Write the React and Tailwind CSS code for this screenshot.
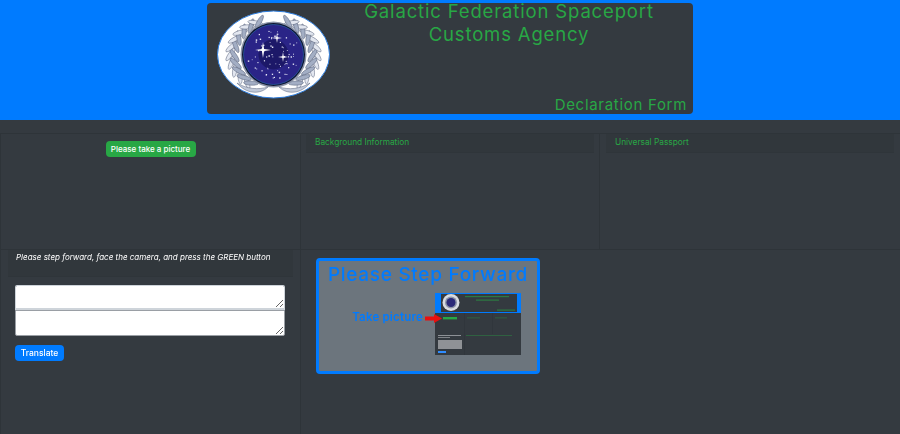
import React from 'react';

const face = "font-['Inter','Noto_Sans',sans-serif]";

// stars spread over the seal, fixed seed so the picture stays the same
function makeStars(count, cx, cy, r) {
  let seed = 17;
  const next = () => {
    seed = (seed * 16807) % 2147483647;
    return (seed % 1000) / 1000;
  };
  const out = [];
  for (let i = 0; i < count; i++) {
    const a = next() * Math.PI * 2;
    const d = Math.sqrt(next()) * r;
    out.push({ x: cx + Math.cos(a) * d, y: cy + Math.sin(a) * d * 0.92, s: 0.45 + next() * 0.45 });
  }
  return out;
}

function Sparkle({ x, y, r }) {
  const w = r * 0.14;
  return (
    <path
      fill="#fff"
      d={`M${x} ${y - r}L${x + w} ${y - w}L${x + r} ${y}L${x + w} ${y + w}L${x} ${y + r}L${x - w} ${y + w}L${x - r} ${y}L${x - w} ${y - w}Z`}
    />
  );
}

function Laurel() {
  const leaves = [];
  for (let i = 0; i < 10; i++) {
    const deg = 128 + i * 13;
    const rad = (deg * Math.PI) / 180;
    const x = 56.5 + Math.cos(rad) * 43;
    const y = 44.5 + Math.sin(rad) * 35;
    leaves.push({ x, y, rot: deg - 55 });
    leaves.push({ x: x + 4, y: y + (i < 5 ? 1 : -1), rot: deg - 125 });
  }
  return (
    <g>
      {leaves.map((l, i) => (
        <ellipse key={i} cx={l.x} cy={l.y} rx="7.5" ry="2.1" fill={i % 2 ? '#a3aec4' : '#e3e7f0'} stroke="#4a5570" strokeWidth="0.45" transform={`rotate(${l.rot} ${l.x} ${l.y})`} />
      ))}
      <path d="M20 73C30 79 41 80 51 77C43 85 29 84 20 73Z" fill="#c2cad9" stroke="#4a5570" strokeWidth="0.45" />
    </g>
  );
}

function FederationSeal({ className }) {
  const stars = makeStars(70, 56.5, 44.5, 27);
  return (
    <svg viewBox="0 0 114 90" className={className}>
      <ellipse cx="56.5" cy="44.5" rx="56" ry="43.5" fill="#fff" stroke="#2f7fe0" strokeWidth="1" />
      <Laurel />
      <g transform="translate(113 0) scale(-1 1)">
        <Laurel />
      </g>
      <circle cx="56.5" cy="44.5" r="33" fill="#8a93a6" />
      <circle cx="56.5" cy="44.5" r="31.5" fill="#0d1330" />
      <circle cx="56.5" cy="44.5" r="30" fill="#2a2487" stroke="#2a6fb0" strokeWidth="0.6" />
      <circle cx="56.5" cy="44.5" r="15" fill="#1c1868" />
      {stars.map((s, i) => (
        <rect key={i} x={s.x} y={s.y} width={s.s * 1.7} height={s.s * 1.7} fill="#e6e8f6" />
      ))}
      <Sparkle x={46} y={40} r={8} />
      <Sparkle x={60} y={28} r={5} />
      <Sparkle x={66} y={47} r={5} />
    </svg>
  );
}

// the tiny screenshot of this same page inside the instruction picture
function PageThumb() {
  return (
    <svg viewBox="0 0 86 62" className="block w-[86px] h-[62px] shrink-0">
      <rect width="86" height="62" fill="#343a40" />
      <rect width="86" height="20" fill="#007bff" />
      <rect x="6" y="1" width="76" height="18" fill="#343a40" />
      <circle cx="16" cy="9.5" r="8.5" fill="#d9dce2" />
      <circle cx="16" cy="9.5" r="6" fill="#8d95a8" />
      <circle cx="16" cy="9.5" r="4.5" fill="#2b2a78" />
      <rect x="30" y="3" width="44" height="1.2" fill="#28a745" opacity="0.6" />
      <rect x="41" y="6.5" width="23" height="1.2" fill="#28a745" opacity="0.6" />
      <rect x="62" y="16.5" width="18" height="1.2" fill="#28a745" opacity="0.6" />
      <rect x="8" y="24" width="14" height="2.4" fill="#28a745" />
      <rect x="32" y="24.5" width="13" height="0.8" fill="#28a745" opacity="0.45" />
      <rect x="60" y="24.5" width="12" height="0.8" fill="#28a745" opacity="0.45" />
      <rect x="31" y="42" width="46" height="0.8" fill="#28a745" opacity="0.45" />
      <rect x="3" y="42" width="23" height="1" fill="#c9ccd0" opacity="0.6" />
      <rect x="3" y="44" width="12" height="1" fill="#c9ccd0" opacity="0.5" />
      <rect x="3" y="47" width="24" height="9" fill="#8f9296" />
      <rect x="3" y="58" width="8" height="2" fill="#2f8cff" />
      <path d="M29.5 20V62M57.5 20V41" stroke="#2d3238" strokeWidth="0.5" />
    </svg>
  );
}

export default function App() {
  return (
    <div className={`min-h-screen w-full bg-[#343a40] overflow-hidden ${face}`}>
      <header className="bg-[#007bff] h-[120px] pt-[3px]">
        <div className="w-[486px] h-[111px] mx-auto bg-[#343a40] rounded-sm flex pl-[10px] pr-[6px]">
          <FederationSeal className="w-[114px] h-[90px] mt-[7px] shrink-0" />
          <div className="flex-1 flex flex-col justify-between text-[#28a745]">
            <h1 className="-mt-[3px] text-center text-[18.5px] leading-[23px] tracking-[0.85px] font-normal">
              Galactic Federation Spaceport
              <br />
              Customs Agency
            </h1>
            <p className="text-right text-[15px] leading-[20px] tracking-[0.7px] -mb-[1px]">Declaration Form</p>
          </div>
        </div>
      </header>

      <div className="mt-[13px] grid grid-cols-[301px_299px_300px] grid-rows-[116px_185px]">
        <section className="border-r border-l border-t border-[#2e3439] flex justify-center items-start pt-[7px]">
          <button className="w-[90px] h-[16px] bg-[#28a745] rounded-sm text-white text-[8px] leading-[16px] font-medium">
            Please take a picture
          </button>
        </section>
        <section className="border-r border-t border-[#2e3439] px-[5px]">
          <div className="h-[19px] bg-[#31373c] border-b border-[#2f353a] pl-[9px] text-[#28a745] text-[8.3px] leading-[17px]">
            Background Information
          </div>
        </section>
        <section className="border-t border-[#2e3439] px-[6px]">
          <div className="h-[19px] bg-[#31373c] border-b border-[#2f353a] pl-[9px] text-[#28a745] text-[8.3px] leading-[17px]">
            Universal Passport
          </div>
        </section>

        <section className="border-t border-r border-l border-[#2e3439]">
          <div className="mx-[7px] h-[27px] bg-[#31373c] border-b border-[#2f353a] pl-[8px] text-white text-[8px] leading-[15px] italic">
            Please step forward, face the camera, and press the GREEN button
          </div>
          <div className="px-[14px] pt-[8px]">
            <textarea className="block w-[270px] h-[25px] bg-white border border-[#ced4da] border-b-[2px] rounded-t-[2px]" />
            <textarea className="block w-[270px] h-[26px] bg-white border border-[#9a9fa5] rounded-b-[2px]" />
            <button className="block mt-[9px] w-[49px] h-[16px] bg-[#007bff] rounded-sm text-white text-[8.5px] leading-[14px] font-medium">
              Translate
            </button>
          </div>
        </section>

        <section className="col-span-2 border-t border-[#2e3439] pl-[15px] pt-[8px]">
          <div className="w-[224px] h-[116px] bg-[#6c757d] border-[3px] border-[#007bff] rounded-[4px]">
            <h2 className="mt-[2px] text-center text-[#007bff] text-[19px] leading-[24px] font-medium tracking-[0.7px]">Please Step Forward</h2>
            <div className="flex justify-end items-start pr-[16px] pt-[6px]">
              <span className="mt-[16px] mr-[2px] text-[#007bff] text-[11.5px] leading-[16px] font-semibold tracking-[0.2px]">Take picture</span>
              <svg viewBox="0 0 17 9" className="mt-[21px] -mr-[7px] w-[17px] h-[9px] shrink-0 relative z-10">
                <path d="M0 2.5H9V0L17 4.5L9 9V6.5H0Z" fill="#e81010" />
              </svg>
              <PageThumb />
            </div>
          </div>
        </section>
      </div>
    </div>
  );
}
